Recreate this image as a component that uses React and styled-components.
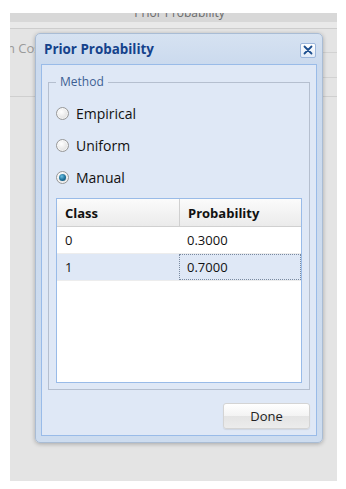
import React from "react";
import styled, { createGlobalStyle } from "styled-components";

const Global = createGlobalStyle`
  html, body { margin: 0; padding: 0; background: #ffffff; }
  body { font-family: "Open Sans", "Noto Sans", sans-serif; }
  * { box-sizing: border-box; }
`;

const Page = styled.div`
  width: 346px;
  height: 489px;
  padding: 13px 9px 8px 10px;
  background: #ffffff;
`;

const Screen = styled.div`
  position: relative;
  height: 100%;
  background: #e4e4e4;
  overflow: hidden;
`;

const TopStrip = styled.div`
  height: 9px;
  background: #d8d8d8;
  overflow: hidden;
  text-align: center;
  font-size: 12px;
  line-height: 16px;
  color: #6a6a6a;
  padding-left: 12px;
`;

const StripText = styled.div`
  margin-top: -8px;
`;

const Band = styled.div`
  height: 7px;
  background: #e9e9e9;
  border-bottom: 1px solid #cdcdcd;
`;

const TabRow = styled.div`
  height: 68px;
  border-bottom: 1px solid #cfcfcf;
  display: flex;
  flex-direction: column;
`;

const TabLabel = styled.div`
  font-size: 13px;
  color: #9a9a9a;
  line-height: 18px;
  margin-top: 10px;
  margin-left: -26px;
  white-space: nowrap;
`;

const SideLine = styled.div`
  align-self: flex-end;
  width: 40px;
  height: 1px;
  background: #d2d2d2;
  margin-top: ${(p) => p.$gap}px;
`;

const Dialog = styled.div`
  position: absolute;
  left: 25px;
  top: 20px;
  width: 288px;
  height: 410px;
  border: 1px solid #a9bcd4;
  border-radius: 5px;
  background: linear-gradient(#d6e2f1, #cbdaee 30px, #cddcef);
  padding: 0 5px 6px 5px;
  display: flex;
  flex-direction: column;
  box-shadow: 0 1px 4px rgba(0, 0, 0, 0.28);
`;

const Header = styled.div`
  height: 30px;
  display: flex;
  align-items: center;
  justify-content: space-between;
  padding-left: 3px;
  padding-right: 1px;
`;

const Title = styled.div`
  font-weight: 700;
  font-size: 13.4px;
  color: #15428b;
  line-height: 16px;
`;

const CloseButton = styled.button`
  width: 16px;
  height: 15px;
  padding: 0;
  border: 1px solid #9db7dc;
  border-radius: 2px;
  background: linear-gradient(#ffffff, #e2ebf7);
  display: flex;
  align-items: center;
  justify-content: center;
  margin-top: 2px;
`;

const Body = styled.div`
  flex: 1;
  border: 1px solid #99bbe8;
  background: #dfe8f6;
  padding: 9px 6px 5px 6px;
  display: flex;
  flex-direction: column;
`;

const Fieldset = styled.fieldset`
  margin: 0;
  border: 1px solid #b5bfcf;
  padding: 7px 7px 6px 7px;
  display: flex;
  flex-direction: column;
  min-width: 0;
`;

const Legend = styled.legend`
  padding: 0 4px;
  font-size: 12px;
  line-height: 16px;
  color: #3d5f93;
`;

const RadioRow = styled.label`
  height: 32px;
  display: flex;
  align-items: center;
  gap: 7px;
  font-size: 14px;
  color: #111;
`;

const RadioCircle = styled.span`
  width: 13px;
  height: 13px;
  border-radius: 50%;
  border: 1px solid #989898;
  background: radial-gradient(circle at 40% 35%, #ffffff, #e6e6e6 60%, #cbcbcb);
  display: flex;
  align-items: center;
  justify-content: center;
  box-shadow: inset 0 0 0 1px rgba(255, 255, 255, 0.6);
`;

const RadioDot = styled.span`
  width: 7px;
  height: 7px;
  border-radius: 50%;
  background: radial-gradient(circle at 40% 35%, #6cc0e3, #1d6f98 55%, #0f4a6e);
`;

const Grid = styled.div`
  margin-top: 5px;
  height: 185px;
  border: 1px solid #99bbe8;
  background: #ffffff;
  display: flex;
  flex-direction: column;
`;

const GridRow = styled.div`
  display: grid;
  grid-template-columns: 122px 1fr;
  height: ${(p) => (p.$head ? 28 : 27)}px;
  background: ${(p) =>
    p.$head
      ? "linear-gradient(#fbfbfb, #ebebeb)"
      : p.$selected
      ? "#dfe8f6"
      : "#ffffff"};
  border-bottom: 1px solid ${(p) => (p.$head ? "#d0d0d0" : "#ededed")};
`;

const Cell = styled.div`
  display: flex;
  align-items: center;
  padding-left: 8px;
  font-size: 13px;
  font-weight: ${(p) => (p.$head ? 700 : 400)};
  color: #111;
  border-left: ${(p) => (p.$head && p.$second ? "1px solid #d0d0d0" : "none")};
  outline: ${(p) => (p.$focus ? "1px dotted #7a8aa0" : "none")};
  outline-offset: -1px;
`;

const Footer = styled.div`
  margin-top: 13px;
  display: flex;
  justify-content: flex-end;
`;

const Button = styled.button`
  width: 87px;
  height: 26px;
  border: 1px solid #d4d4d4;
  border-radius: 3px;
  background: linear-gradient(#ffffff, #f3f3f3 50%, #e4e4e4 51%, #ececec);
  font-family: "Open Sans", "Noto Sans", sans-serif;
  font-size: 13px;
  color: #222;
  padding: 0;
  box-shadow: 0 1px 1px rgba(0, 0, 0, 0.08);
`;

const CloseIcon = () => (
  <svg width="10" height="10" viewBox="0 0 10 10">
    <path d="M1.5 1.5 L8.5 8.5 M8.5 1.5 L1.5 8.5" stroke="#1d4f8f" strokeWidth="1.8" strokeLinecap="round" />
  </svg>
);

const Radio = ({ label, checked }) => (
  <RadioRow>
    <RadioCircle>{checked && <RadioDot />}</RadioCircle>
    {label}
  </RadioRow>
);

const rows = [
  { cls: "0", prob: "0.3000" },
  { cls: "1", prob: "0.7000", selected: true },
];

export default function App() {
  return (
    <>
      <Global />
      <Page>
        <Screen>
          <TopStrip>
            <StripText>Prior Probability</StripText>
          </TopStrip>
          <Band />
          <TabRow>
            <TabLabel>ation Cost</TabLabel>
            <SideLine $gap={-5} />
            <SideLine $gap={24} />
          </TabRow>
          <Dialog>
            <Header>
              <Title>Prior Probability</Title>
              <CloseButton aria-label="Close">
                <CloseIcon />
              </CloseButton>
            </Header>
            <Body>
              <Fieldset>
                <Legend>Method</Legend>
                <Radio label="Empirical" />
                <Radio label="Uniform" />
                <Radio label="Manual" checked />
                <Grid>
                  <GridRow $head>
                    <Cell $head>Class</Cell>
                    <Cell $head $second>Probability</Cell>
                  </GridRow>
                  {rows.map((r) => (
                    <GridRow key={r.cls} $selected={r.selected}>
                      <Cell>{r.cls}</Cell>
                      <Cell $focus={r.selected}>{r.prob}</Cell>
                    </GridRow>
                  ))}
                </Grid>
              </Fieldset>
              <Footer>
                <Button>Done</Button>
              </Footer>
            </Body>
          </Dialog>
        </Screen>
      </Page>
    </>
  );
}
